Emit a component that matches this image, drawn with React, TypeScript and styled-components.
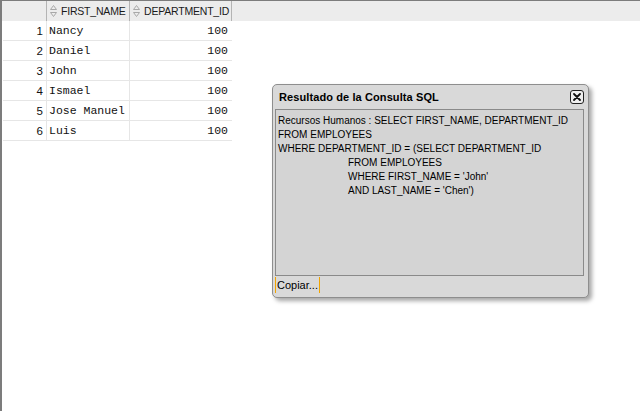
import styled, { createGlobalStyle } from "styled-components";

const GlobalStyle = createGlobalStyle`
  html, body {
    margin: 0;
    padding: 0;
    background: #ffffff;
  }
  body {
    font-family: "Liberation Sans", Arial, sans-serif;
    font-size: 11px;
    color: #000;
  }
`;

const rows = [
  { id: 1, name: "Nancy", dept: 100 },
  { id: 2, name: "Daniel", dept: 100 },
  { id: 3, name: "John", dept: 100 },
  { id: 4, name: "Ismael", dept: 100 },
  { id: 5, name: "Jose Manuel", dept: 100 },
  { id: 6, name: "Luis", dept: 100 },
];

const sqlLines = [
  { text: "Recursos Humanos : SELECT FIRST_NAME, DEPARTMENT_ID", indent: false },
  { text: "FROM EMPLOYEES", indent: false },
  { text: "WHERE DEPARTMENT_ID = (SELECT DEPARTMENT_ID", indent: false },
  { text: "FROM EMPLOYEES", indent: true },
  { text: "WHERE FIRST_NAME = 'John'", indent: true },
  { text: "AND LAST_NAME = 'Chen')", indent: true },
];

const S = {
  Page: styled.div`
    position: relative;
    width: 640px;
    height: 411px;
    box-sizing: border-box;
    border-left: 2px solid #7c7c7c;
    border-top: 1px solid #7c7c7c;
    overflow: hidden;
  `,
  HeaderBar: styled.div`
    display: grid;
    grid-template-columns: 44px 83px 102px;
    height: 20px;
    background: #ececec;
  `,
  HeaderCell: styled.div<{ $first?: boolean }>`
    display: flex;
    align-items: center;
    gap: 4px;
    padding-left: 3px;
    white-space: nowrap;
    overflow: hidden;
    border-left: 1px solid ${({ $first }) => ($first ? "transparent" : "#b4b4b4")};
    border-right: ${({ $first }) => ($first ? "none" : "1px solid #b4b4b4")};
    margin-right: ${({ $first }) => ($first ? "0" : "-1px")};
    font-size: 10.5px;
    letter-spacing: -0.2px;
    color: #1a1a1a;
    svg {
      flex-shrink: 0;
    }
  `,
  Body: styled.div`
    display: flex;
    flex-direction: column;
    width: 229px;
    margin-left: 1px;
  `,
  Row: styled.div`
    display: grid;
    grid-template-columns: 43px 83px 102px;
    height: 20px;
    border-bottom: 1px solid #e6e6e6;
    box-sizing: border-box;
  `,
  RowNum: styled.div`
    display: flex;
    align-items: center;
    justify-content: flex-end;
    padding-right: 3px;
    font-size: 11.5px;
    color: #111;
  `,
  DataCell: styled.div<{ $right?: boolean }>`
    display: flex;
    align-items: center;
    justify-content: ${({ $right }) => ($right ? "flex-end" : "flex-start")};
    padding: 0 3px 0 2px;
    border-left: 1px solid #e6e6e6;
    font-family: "Liberation Mono", "Courier New", monospace;
    font-size: 11.5px;
    color: #111;
  `,
  Dialog: styled.div`
    position: absolute;
    left: 270px;
    top: 83px;
    width: 317px;
    height: 214px;
    box-sizing: border-box;
    background: #d9d9d9;
    border: 1px solid #8e8e8e;
    border-radius: 5px;
    box-shadow: 3px 3px 4px rgba(0, 0, 0, 0.35);
    display: flex;
    flex-direction: column;
    padding: 2px 4px 2px 2px;
  `,
  TitleBar: styled.div`
    display: flex;
    align-items: center;
    justify-content: space-between;
    height: 20px;
    padding: 0 0 0 4px;
  `,
  Title: styled.span`
    font-weight: bold;
    font-size: 11px;
    letter-spacing: 0.1px;
  `,
  CloseButton: styled.button`
    display: flex;
    align-items: center;
    justify-content: center;
    width: 14px;
    height: 14px;
    padding: 0;
    border: 1px solid #222;
    border-radius: 3px;
    background: #efefef;
  `,
  TextArea: styled.div`
    flex: 1;
    margin-top: 2px;
    border: 1px solid #8a8a8a;
    background: #d4d4d4;
    padding: 4px 2px 2px;
    display: flex;
    flex-direction: column;
  `,
  Line: styled.div<{ $indent?: boolean }>`
    height: 14px;
    line-height: 14px;
    font-size: 10px;
    padding-left: ${({ $indent }) => ($indent ? "70px" : "0")};
    white-space: pre;
  `,
  Footer: styled.div`
    display: flex;
    height: 18px;
    padding-top: 1px;
  `,
  CopyButton: styled.button`
    padding: 0 1px 0 1px;
    border: none;
    border-left: 1px solid #f2a400;
    border-right: 1px solid #f2a400;
    background: transparent;
    font-family: "Liberation Sans", Arial, sans-serif;
    font-size: 11px;
    color: #000;
    height: 16px;
  `,
};

function SortIcon() {
  return (
    <svg width="7" height="12" viewBox="0 0 7 12">
      <path d="M3.5 0.5 L6.5 4.5 L0.5 4.5 Z" fill="none" stroke="#a8a8a8" strokeWidth="1" />
      <path d="M3.5 11.5 L6.5 7.5 L0.5 7.5 Z" fill="none" stroke="#a8a8a8" strokeWidth="1" />
    </svg>
  );
}

function CloseIcon() {
  return (
    <svg width="8" height="8" viewBox="0 0 8 8">
      <path d="M1 1 L7 7 M7 1 L1 7" stroke="#111" strokeWidth="1.8" strokeLinecap="round" />
    </svg>
  );
}

function ResultGrid() {
  return (
    <>
      <S.HeaderBar>
        <S.HeaderCell $first />
        <S.HeaderCell>
          <SortIcon />
          FIRST_NAME
        </S.HeaderCell>
        <S.HeaderCell>
          <SortIcon />
          DEPARTMENT_ID
        </S.HeaderCell>
      </S.HeaderBar>
      <S.Body>
        {rows.map((row) => (
          <S.Row key={row.id}>
            <S.RowNum>{row.id}</S.RowNum>
            <S.DataCell>{row.name}</S.DataCell>
            <S.DataCell $right>{row.dept}</S.DataCell>
          </S.Row>
        ))}
      </S.Body>
    </>
  );
}

function SqlDialog() {
  return (
    <S.Dialog>
      <S.TitleBar>
        <S.Title>Resultado de la Consulta SQL</S.Title>
        <S.CloseButton>
          <CloseIcon />
        </S.CloseButton>
      </S.TitleBar>
      <S.TextArea>
        {sqlLines.map((line, i) => (
          <S.Line key={i} $indent={line.indent}>
            {line.text}
          </S.Line>
        ))}
      </S.TextArea>
      <S.Footer>
        <S.CopyButton>Copiar...</S.CopyButton>
      </S.Footer>
    </S.Dialog>
  );
}

export default function App() {
  return (
    <>
      <GlobalStyle />
      <S.Page>
        <ResultGrid />
        <SqlDialog />
      </S.Page>
    </>
  );
}
